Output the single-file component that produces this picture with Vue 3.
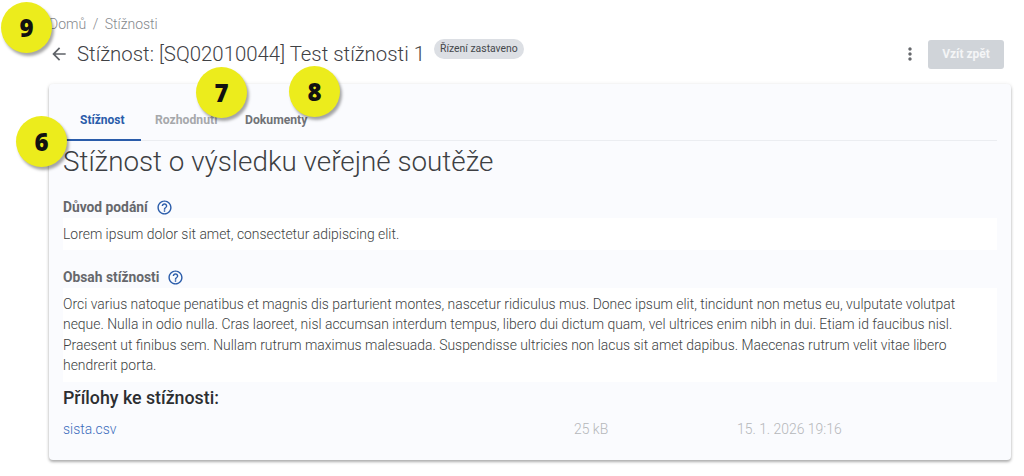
<script setup>
const markers = [
  { n: 9, x: 1, y: 2 },
  { n: 7, x: 196, y: 67 },
  { n: 8, x: 289, y: 66 },
  { n: 6, x: 16, y: 116 }
]
const tabs = [
  { label: 'Stížnost', cls: 'active' },
  { label: 'Rozhodnutí', cls: 'muted' },
  { label: 'Dokumenty', cls: 'docs' }
]
</script>

<template>
  <div class="page">
    <nav class="crumbs"><span>Domů</span><span class="sep">/</span><span>Stížnosti</span></nav>
    <header class="head">
      <svg class="back" width="20" height="20" viewBox="0 0 24 24"><path d="M20 11H7.83l5.59-5.59L12 4l-8 8 8 8 1.41-1.41L7.83 13H20v-2z" fill="#5f6368"/></svg>
      <h1 class="title">Stížnost: [SQ02010044] Test stížnosti 1</h1>
      <span class="chip">Řízení zastaveno</span>
      <span class="spacer"></span>
      <svg class="more" width="20" height="20" viewBox="0 0 24 24"><path d="M12 8c1.1 0 2-.9 2-2s-.9-2-2-2-2 .9-2 2 .9 2 2 2zm0 2c-1.1 0-2 .9-2 2s.9 2 2 2 2-.9 2-2-.9-2-2-2zm0 6c-1.1 0-2 .9-2 2s.9 2 2 2 2-.9 2-2-.9-2-2-2z" fill="#66686c"/></svg>
      <button class="btn" disabled>Vzít zpět</button>
    </header>
    <main class="card">
      <div class="tabs">
        <div v-for="t in tabs" :key="t.label" class="tab" :class="t.cls">{{ t.label }}</div>
      </div>
      <h2 class="heading">Stížnost o výsledku veřejné soutěže</h2>
      <div class="label first">Důvod podání
        <svg width="17" height="17" viewBox="0 0 24 24"><path d="M11 18h2v-2h-2v2zm1-16C6.48 2 2 6.48 2 12s4.48 10 10 10 10-4.48 10-10S17.52 2 12 2zm0 18c-4.41 0-8-3.59-8-8s3.59-8 8-8 8 3.59 8 8-3.59 8-8 8zm0-14c-2.21 0-4 1.79-4 4h2c0-1.1.9-2 2-2s2 .9 2 2c0 2-3 1.75-3 5h2c0-2.25 3-2.5 3-5 0-2.21-1.79-4-4-4z" fill="#2a5caa"/></svg>
      </div>
      <div class="box">Lorem ipsum dolor sit amet, consectetur adipiscing elit.</div>
      <div class="label second">Obsah stížnosti
        <svg width="17" height="17" viewBox="0 0 24 24"><path d="M11 18h2v-2h-2v2zm1-16C6.48 2 2 6.48 2 12s4.48 10 10 10 10-4.48 10-10S17.52 2 12 2zm0 18c-4.41 0-8-3.59-8-8s3.59-8 8-8 8 3.59 8 8-3.59 8-8 8zm0-14c-2.21 0-4 1.79-4 4h2c0-1.1.9-2 2-2s2 .9 2 2c0 2-3 1.75-3 5h2c0-2.25 3-2.5 3-5 0-2.21-1.79-4-4-4z" fill="#2a5caa"/></svg>
      </div>
      <div class="box">Orci varius natoque penatibus et magnis dis parturient montes, nascetur ridiculus mus. Donec ipsum elit, tincidunt non metus eu, vulputate volutpat neque. Nulla in odio nulla. Cras laoreet, nisl accumsan interdum tempus, libero dui dictum quam, vel ultrices enim nibh in dui. Etiam id faucibus nisl. Praesent ut finibus sem. Nullam rutrum maximus malesuada. Suspendisse ultricies non lacus sit amet dapibus. Maecenas rutrum velit vitae libero hendrerit porta.</div>
      <h3 class="att">Přílohy ke stížnosti:</h3>
      <div class="file">
        <span class="name">sista.csv</span>
        <span class="size">25 kB</span>
        <span class="date">15. 1. 2026 19:16</span>
      </div>
    </main>
    <div v-for="m in markers" :key="m.n" class="marker" :style="{ left: m.x + 'px', top: m.y + 'px' }">{{ m.n }}</div>
  </div>
</template>

<style>
html, body { margin: 0; background: #fff; }
</style>

<style scoped>
.page {
  position: relative;
  width: 1024px;
  height: 476px;
  overflow: hidden;
  box-sizing: border-box;
  padding: 16px 13px 0 49px;
  font-family: Roboto, "Liberation Sans", sans-serif;
  background: #fff;
}
.crumbs { display: flex; gap: 6.5px; font-size: 14px; line-height: 17px; color: #85888c; font-weight: 300; }
.head { display: flex; align-items: center; height: 36px; margin-top: 3px; margin-right: 7px; }
.back { flex: none; margin-left: 0; margin-right: 8px; }
.title { margin: 0; font-size: 20.4px; font-weight: 300; color: #3f4145; line-height: 36px; white-space: nowrap; }
.chip { align-self: flex-start; margin: 3px 0 0 8.5px; height: 20px; line-height: 20px; padding: 0 6.5px; border-radius: 10px; background: #dcdfe4; font-size: 10.4px; color: #44474b; }
.spacer { flex: 1; }
.more { margin-right: 8px; }
.btn { width: 76px; height: 29px; border: 0; border-radius: 3px; background: #d0d4d9; color: #f4f5f6; font: 700 12px Roboto, sans-serif; padding: 0; }
.card {
  margin-top: 12px;
  height: 376px;
  box-sizing: border-box;
  padding: 0 14px;
  background: #fafbfe;
  border-radius: 4px;
  box-shadow: 0 2px 3px rgba(0,0,0,.3), 0 0 4px rgba(0,0,0,.07);
}
.tabs { display: flex; height: 57px; border-bottom: 1px solid #ebedf1; box-sizing: border-box; }
.tab { padding-top: 28px; box-sizing: border-box; font-size: 12.2px; font-weight: 700; color: #707276; line-height: 17px; }
.tab.active { color: #2a5caa; border-bottom: 2px solid #2a5caa; height: 57px; width: 78px; padding-left: 17px; font-size: 12px; }
.tab.muted { color: #a6a8ab; width: 104px; padding-left: 14px; }
.tab.docs { padding-left: 0; }
.heading { margin: 3px 0 0; font-size: 27.8px; font-weight: 300; color: #3d3f43; line-height: 36px; }
.label { display: flex; align-items: center; gap: 8px; font-size: 13.8px; font-weight: 700; color: #66686c; line-height: 20px; }
.label.first { margin-top: 17px; }
.label.second { margin-top: 16.6px; }
.box { margin-top: 1px; padding: 6px 0; background: #fff; font-size: 13.92px; font-weight: 300; color: #3d3f43; line-height: 20.4px; }
.att { margin: 4.4px 0 0; font-size: 17.8px; font-weight: 500; color: #2c2e31; line-height: 24px; }
.file { display: grid; grid-template-columns: 511px 163px auto; margin-top: 9px; font-size: 13.92px; font-weight: 300; line-height: 20px; }
.name { color: #3a6cbc; }
.size, .date { color: #b5b7ba; }
.marker {
  position: absolute;
  width: 51px; height: 51px;
  border-radius: 50%;
  background: #ecec1c;
  box-shadow: 2px 3px 3px rgba(0,0,0,.35);
  font-family: "Open Sans", sans-serif;
  font-size: 24px; font-weight: 800; color: #111;
  display: flex; align-items: center; justify-content: center;
}
</style>
